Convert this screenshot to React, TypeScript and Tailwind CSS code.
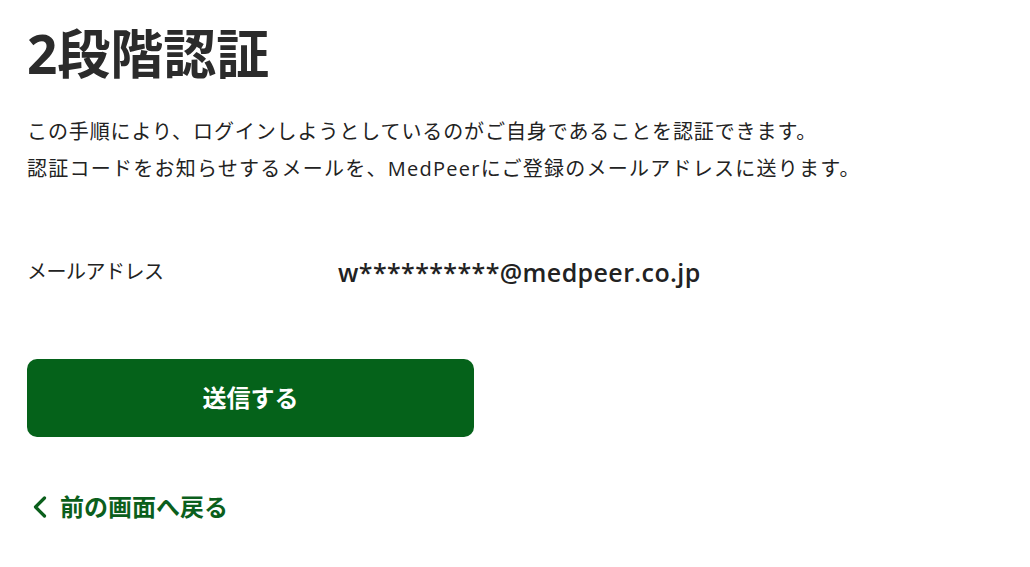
import React from "react";

export default function App() {
  return (
    <div
      className="min-h-[567px] w-[1030px] bg-white pl-[27px] text-[#222]"
      style={{ fontFamily: '"Open Sans", "Noto Sans CJK JP", sans-serif' }}
    >
      <h1 className="pt-[19px] text-[53px] font-bold leading-[70px] text-[#2b2b2b]">2段階認証</h1>
      <div className="mt-[24px] text-[20px] leading-[37px] text-[#222]">
        <p className="tracking-[0.9px]">この手順により、ログインしようとしているのがご自身であることを認証できます。</p>
        <p className="tracking-[1.25px]">認証コードをお知らせするメールを、MedPeerにご登録のメールアドレスに送ります。</p>
      </div>
      <div className="mt-[70px] flex items-center">
        <div className="w-[311px] text-[20px] leading-[30px] tracking-[-0.5px]">メールアドレス</div>
        <div className="text-[25px] font-semibold leading-[30px] tracking-[0.4px] text-[#222]">w**********@medpeer.co.jp</div>
      </div>
      <button className="mt-[72px] flex h-[78px] w-[447px] items-center justify-center rounded-[10px] bg-[#05621a] text-[24px] font-bold text-white">
        送信する
      </button>
      <a href="#" className="mt-[52px] flex items-center gap-[12px] text-[24px] font-bold text-[#0b5f1c]">
        <svg width="16" height="24" viewBox="0 0 16 24" className="ml-[5px]">
          <path d="M12.5 3 L3.5 12 L12.5 21" stroke="#0b5f1c" strokeWidth="3.2" fill="none" strokeLinecap="round" strokeLinejoin="round" />
        </svg>
        <span>前の画面へ戻る</span>
      </a>
    </div>
  );
}
